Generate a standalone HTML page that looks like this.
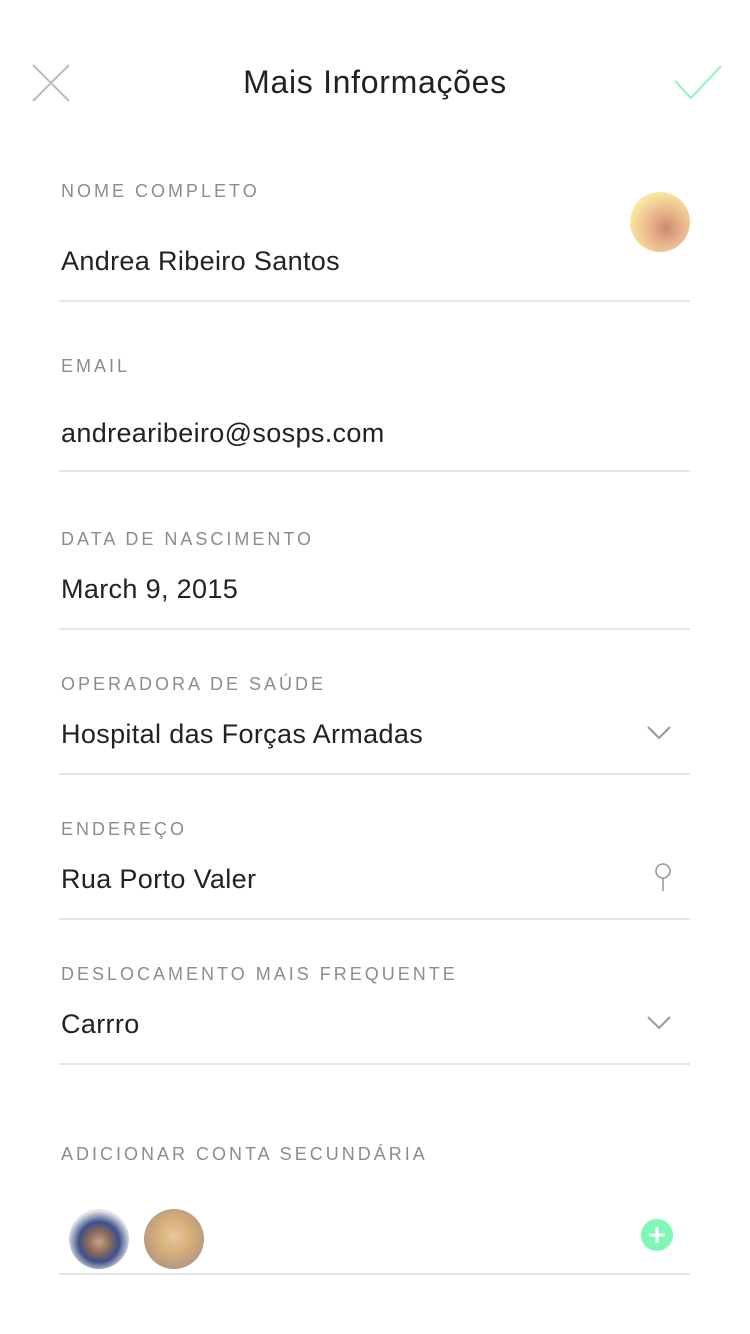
<!DOCTYPE html><html><head><meta charset="utf-8"><style>
body{margin:0;width:750px;height:1334px;background:#fff;position:relative;overflow:hidden;font-family:"Liberation Sans",sans-serif}
.a{position:absolute;white-space:nowrap}
.l{left:61px;font-size:18px;letter-spacing:3px;color:#8c8c8c}
.v{left:61px;font-size:27px;letter-spacing:0.35px;color:#222}
.h{position:absolute;left:59px;width:631px;height:2px;background:#e6e6e6}
</style></head><body>
<svg class="a" style="left:32px;top:64px" width="38" height="38"><path d="M1 1L37 37M37 1L1 37" stroke="#bdbdbd" stroke-width="2"/></svg>
<div class="a" style="left:0;width:750px;text-align:center;top:64px;font-size:32px;letter-spacing:0.7px;color:#222">Mais Informações</div>
<svg class="a" style="left:674px;top:64px" width="48" height="36"><path d="M1 17L17 34L47 2" stroke="#8ef5c0" stroke-width="2" fill="none"/></svg>

<div class="a l" style="top:181px">NOME COMPLETO</div>
<div class="a" style="left:630px;top:192px;width:60px;height:60px;border-radius:50%;background:radial-gradient(circle at 60% 60%,#c98a6e 0,#e7b08a 30%,#f8e6a0 70%)"></div>
<div class="a v" style="top:246px">Andrea Ribeiro Santos</div>
<div class="h" style="top:300px"></div>

<div class="a l" style="top:356px">EMAIL</div>
<div class="a v" style="top:418px">andrearibeiro@sosps.com</div>
<div class="h" style="top:470px"></div>

<div class="a l" style="top:529px">DATA DE NASCIMENTO</div>
<div class="a v" style="top:574px">March 9, 2015</div>
<div class="h" style="top:628px"></div>

<div class="a l" style="top:674px">OPERADORA DE SAÚDE</div>
<div class="a v" style="top:719px">Hospital das Forças Armadas</div>
<svg class="a" style="left:647px;top:726px" width="24" height="14"><path d="M1 1L12 12L23 1" stroke="#999" stroke-width="2" fill="none"/></svg>
<div class="h" style="top:773px"></div>

<div class="a l" style="top:819px">ENDEREÇO</div>
<div class="a v" style="top:864px">Rua Porto Valer</div>
<svg class="a" style="left:653px;top:862px" width="20" height="30"><circle cx="10" cy="9" r="7" stroke="#999" stroke-width="1.6" fill="none"/><path d="M10 16V29" stroke="#999" stroke-width="1.6"/></svg>
<div class="h" style="top:918px"></div>

<div class="a l" style="top:964px">DESLOCAMENTO MAIS FREQUENTE</div>
<div class="a v" style="top:1009px">Carrro</div>
<svg class="a" style="left:647px;top:1016px" width="24" height="14"><path d="M1 1L12 12L23 1" stroke="#999" stroke-width="2" fill="none"/></svg>
<div class="h" style="top:1063px"></div>

<div class="a l" style="top:1144px">ADICIONAR CONTA SECUNDÁRIA</div>
<div class="a" style="left:69px;top:1209px;width:60px;height:60px;border-radius:50%;background:radial-gradient(circle at 50% 55%,#c9a28a 0,#8a6a5a 25%,#3d4f8a 45%,#e6e6e6 70%)"></div>
<div class="a" style="left:144px;top:1209px;width:60px;height:60px;border-radius:50%;background:radial-gradient(circle at 50% 45%,#e8c8a0 0,#d8b078 35%,#b89a80 70%)"></div>
<div class="a" style="left:641px;top:1219px;width:32px;height:32px;border-radius:50%;background:#7ef7b7"></div>
<svg class="a" style="left:641px;top:1219px" width="32" height="32"><path d="M16 8V24M8 16H24" stroke="#fff" stroke-width="3"/></svg>
<div class="h" style="top:1273px"></div>
</body></html>
